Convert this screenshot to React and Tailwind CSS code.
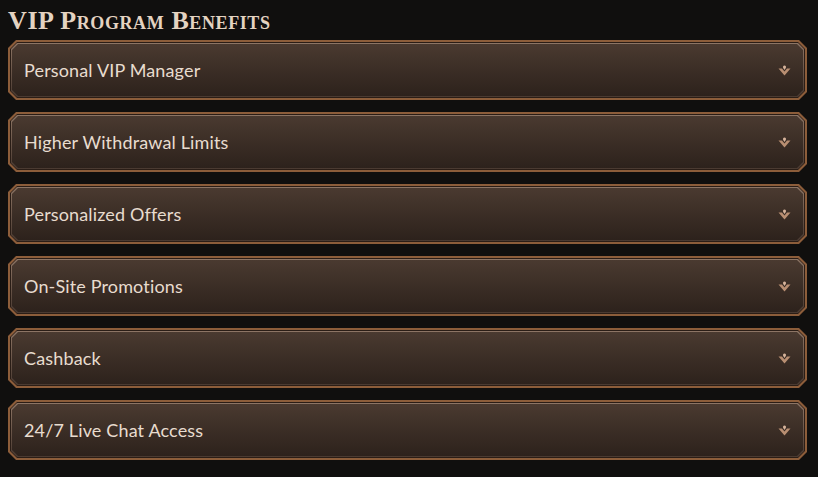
const BENEFITS = [
  'Personal VIP Manager',
  'Higher Withdrawal Limits',
  'Personalized Offers',
  'On-Site Promotions',
  'Cashback',
  '24/7 Live Chat Access',
];

function Fleur() {
  return (
    <svg width="13" height="11" viewBox="0 0 13 11" className="shrink-0">
      <path d="M0.5 3.5 L4 3.5 L6.5 6.5 L9 3.5 L12.5 3.5 L6.5 10.5 Z" fill="#b88e72" />
      <path d="M6.5 0.5 C7.8 0.5 8.3 1.8 7.8 3 L6.5 5 L5.2 3 C4.7 1.8 5.2 0.5 6.5 0.5 Z" fill="#d7b49c" />
    </svg>
  );
}

function BenefitRow({ label }) {
  return (
    <div className="bg-[#8c5d3a] p-[2px] [clip-path:polygon(8px_0,calc(100%-8px)_0,100%_8px,100%_calc(100%-8px),calc(100%-8px)_100%,8px_100%,0_calc(100%-8px),0_8px)]">
      <div className="bg-[#2a1d16] p-[1px] [clip-path:polygon(7px_0,calc(100%-7px)_0,100%_7px,100%_calc(100%-7px),calc(100%-7px)_100%,7px_100%,0_calc(100%-7px),0_7px)]">
        <div className="bg-gradient-to-b from-[#8d7565] to-[#4a3a31] p-[1px] [clip-path:polygon(6px_0,calc(100%-6px)_0,100%_6px,100%_calc(100%-6px),calc(100%-6px)_100%,6px_100%,0_calc(100%-6px),0_6px)]">
          <div className="h-[52px] flex items-center justify-between pl-[12px] pr-[12px] bg-gradient-to-b from-[#4a3a30] to-[#2d221c] [clip-path:polygon(6px_0,calc(100%-6px)_0,100%_6px,100%_calc(100%-6px),calc(100%-6px)_100%,6px_100%,0_calc(100%-6px),0_6px)]">
            <span className="text-[18px] text-[#e8dccf] font-['Lato',sans-serif] tracking-[0.15px]">{label}</span>
            <Fleur />
          </div>
        </div>
      </div>
    </div>
  );
}

export default function App() {
  return (
    <div className="min-h-[477px] bg-[#100f0e] px-2 pt-[6px]">
      <h2 className="font-['Liberation_Serif',serif] font-bold text-[26px] leading-[30px] text-[#e4d3c1] [font-variant:small-caps] tracking-[0.6px] mb-[4px]">
        VIP Program Benefits
      </h2>
      <div className="w-[799px] flex flex-col gap-3">
        {BENEFITS.map((b) => (
          <BenefitRow key={b} label={b} />
        ))}
      </div>
    </div>
  );
}
